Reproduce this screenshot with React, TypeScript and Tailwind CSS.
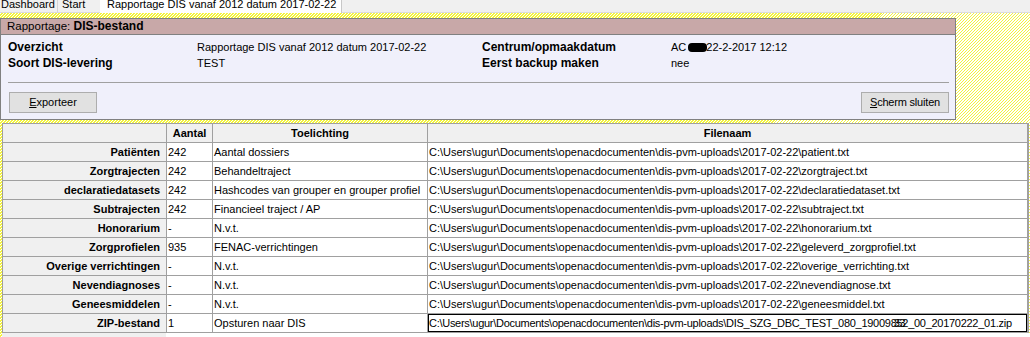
import React from "react";

const base = "C:\\Users\\ugur\\Documents\\openacdocumenten\\dis-pvm-uploads\\";

const rows: [string, string, string, string][] = [
  ["Patiënten", "242", "Aantal dossiers", base + "2017-02-22\\patient.txt"],
  ["Zorgtrajecten", "242", "Behandeltraject", base + "2017-02-22\\zorgtraject.txt"],
  ["declaratiedatasets", "242", "Hashcodes van grouper en grouper profiel", base + "2017-02-22\\declaratiedataset.txt"],
  ["Subtrajecten", "242", "Financieel traject / AP", base + "2017-02-22\\subtraject.txt"],
  ["Honorarium", "-", "N.v.t.", base + "2017-02-22\\honorarium.txt"],
  ["Zorgprofielen", "935", "FENAC-verrichtingen", base + "2017-02-22\\geleverd_zorgprofiel.txt"],
  ["Overige verrichtingen", "-", "N.v.t.", base + "2017-02-22\\overige_verrichting.txt"],
  ["Nevendiagnoses", "-", "N.v.t.", base + "2017-02-22\\nevendiagnose.txt"],
  ["Geneesmiddelen", "-", "N.v.t.", base + "2017-02-22\\geneesmiddel.txt"],
];

export default function App() {
  return (
    <div
      className="w-[1030px] h-[337px] overflow-hidden text-[11px] text-black bg-[repeating-linear-gradient(135deg,#f4f43c_0px,#f4f43c_1.1px,#ffffff_1.1px,#ffffff_2.12px)]"
      style={{ fontFamily: '"Liberation Sans", Arial, sans-serif' }}
    >
      {/* Tab bar */}
      <div className="flex h-[13px] overflow-hidden leading-[13px]">
        <div className="w-[58px] bg-[#f0f0f0] border-r border-[#d4d4d4] border-b border-b-[#dcdcdc] pl-[1px]">
          <span className="block -mt-[2px]">Dashboard</span>
        </div>
        <div className="w-[42px] bg-[#f0f0f0] border-b border-[#dcdcdc] pl-[4px]">
          <span className="block -mt-[2px]">Start</span>
        </div>
        <div className="w-[242px] bg-white border-r border-[#c8c8c8] pl-[7px]">
          <span className="block -mt-[2px]">Rapportage DIS vanaf 2012 datum 2017-02-22</span>
        </div>
        <div className="flex-1 bg-[#f0f0f0] border-b border-[#dcdcdc]" />
      </div>

      {/* Panel */}
      <div className="mt-[5px] w-[956px] border border-[#808080] bg-[#f0f0fb]">
        <div className="h-[16px] bg-[#c8a8a8] border-b border-[#808080] pl-[6px] leading-[15px] text-[11.5px]">
          Rapportage: <span className="font-bold text-[12px]">DIS-bestand</span>
        </div>
        <div className="pl-[7px] pr-[6px] pt-[4px] pb-[6px]">
          <div className="grid grid-cols-[189px_285px_189px_1fr] leading-[16px]">
            <div className="font-bold text-[12px]">Overzicht</div>
            <div>Rapportage DIS vanaf 2012 datum 2017-02-22</div>
            <div className="font-bold text-[12px]">Centrum/opmaakdatum</div>
            <div className="flex items-center">
              <span>AC</span>
              <span className="inline-block w-[19px] h-[9px] bg-black rounded-[4px] ml-[2px] -mr-[1px]" />
              <span>22-2-2017 12:12</span>
            </div>
            <div className="font-bold text-[12px]">Soort DIS-levering</div>
            <div>TEST</div>
            <div className="font-bold text-[12px]">Eerst backup maken</div>
            <div>nee</div>
          </div>
          <div className="mt-[11px] h-px bg-[#a0a0a0]" />
          <div className="mt-[9px] flex justify-between">
            <button className="ml-[1px] w-[88px] h-[21px] bg-[#e1e1e1] border border-[#adadad] text-[11px] leading-[19px]">
              <span className="underline">E</span>xporteer
            </button>
            <button className="w-[88px] h-[21px] bg-[#e1e1e1] border border-[#adadad] text-[11px] leading-[19px] tracking-[-0.2px]">
              <span className="underline">S</span>cherm sluiten
            </button>
          </div>
        </div>
      </div>

      {/* Table */}
      <div className="mt-[3px] ml-[2px] w-[1027px] border border-[#a0a0a0] bg-[#a0a0a0] grid grid-cols-[163px_45px_214px_599px] gap-px auto-rows-[18px] leading-[18px]">
        <div className="bg-[#f0f0f0]" />
        <div className="bg-[#f0f0f0] font-bold text-center">Aantal</div>
        <div className="bg-[#f0f0f0] font-bold text-center">Toelichting</div>
        <div className="bg-[#f0f0f0] font-bold text-center">Filenaam</div>
        {rows.map(([label, n, desc, file]) => (
          <React.Fragment key={label}>
            <div className="bg-[#f0f0f0] font-bold text-right pr-[6px]">{label}</div>
            <div className="bg-white pl-[1px]">{n}</div>
            <div className="bg-white pl-[1px] whitespace-nowrap overflow-hidden">{desc}</div>
            <div className="bg-white pl-[1px] whitespace-nowrap overflow-hidden">{file}</div>
          </React.Fragment>
        ))}
        <div className="bg-[#f0f0f0] font-bold text-right pr-[6px]">ZIP-bestand</div>
        <div className="bg-white pl-[1px]">1</div>
        <div className="bg-white pl-[1px]">Opsturen naar DIS</div>
        <div className="bg-white border border-black leading-[16px] whitespace-nowrap overflow-hidden tracking-[-0.28px]">
          {base}DIS_SZG_DBC_TEST_080_19009
          <span className="relative inline-block">
            <span>852</span>
            <span className="absolute left-[3px] top-0">33</span>
          </span>
          _00_20170222_01.zip
        </div>
      </div>
      <div className="ml-[2px] flex h-[6px]">
        <div className="w-[164px] bg-[#f0f0f0]" />
        <div className="flex-1 bg-white" />
      </div>
    </div>
  );
}
